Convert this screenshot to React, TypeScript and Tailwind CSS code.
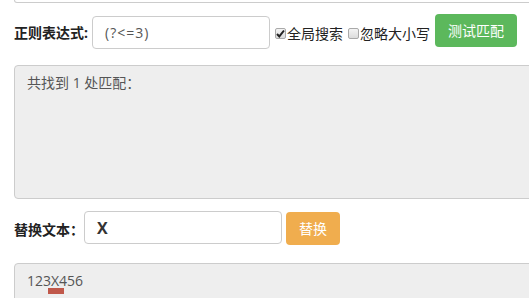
import React from "react";

const font = { fontFamily: '"Open Sans", "Noto Sans CJK SC", sans-serif' };

function Check({ checked }: { checked?: boolean }) {
  return (
    <span className="relative inline-block h-[11px] w-[11px] shrink-0 rounded-[2px] border border-[#a9a9a9] bg-gradient-to-b from-[#f4f4f4] to-[#dcdcdc]">
      {checked && (
        <svg viewBox="0 0 11 11" className="absolute -left-px -top-px h-[11px] w-[11px]">
          <path d="M2 6 L4.3 8.4 L9 2.5" fill="none" stroke="#222" strokeWidth="2" />
        </svg>
      )}
    </span>
  );
}

export default function App() {
  return (
    <div
      className="h-[298px] w-[529px] overflow-hidden bg-white pl-[14px] text-[14px] text-[#333]"
      style={font}
    >
      {/* tail of the panel above */}
      <div className="h-[3px] w-[540px] rounded-b-[4px] border-x border-b border-[#cccccc]" />

      {/* regex row */}
      <div className="mt-[11px] flex h-[35px] items-start">
        <span className="mt-[8px] w-[78px] font-bold text-[#222]">正则表达式:</span>
        <div className="mt-[2px] flex h-[33px] w-[178px] items-center rounded-[4px] border border-[#cccccc] px-[12px] tracking-[1px] text-[#555]">
          (?&lt;=3)
        </div>
        <label className="ml-[5px] mt-[9px] flex items-center gap-[1px] text-[#222]">
          <Check checked />
          全局搜索
        </label>
        <label className="ml-[5px] mt-[9px] flex items-center gap-[1px] text-[#222]">
          <Check />
          忽略大小写
        </label>
        <button className="ml-[5px] flex h-[33px] w-[82px] items-center justify-center rounded-[4px] bg-[#5cb85c] text-white">
          测试匹配
        </button>
      </div>

      {/* match result */}
      <div className="mt-[16px] h-[134px] w-[540px] rounded-[4px] border border-[#cccccc] bg-[#eeeeee] px-[12px] pt-[6px] text-[#555]">
        共找到 1 处匹配：
      </div>

      {/* replace row */}
      <div className="mt-[12px] flex h-[34px] items-start">
        <span className="mt-[8px] w-[70px] font-bold text-[#222]">替换文本：</span>
        <div className="flex h-[33px] w-[198px] items-center rounded-[4px] border border-[#cccccc] px-[12px] text-[16px] font-bold text-[#333]">
          X
        </div>
        <button className="ml-[4px] mt-[1px] flex h-[33px] w-[54px] items-center justify-center rounded-[4px] bg-[#f0ad4e] text-white">
          替换
        </button>
      </div>

      {/* replace result */}
      <div className="mt-[18px] h-[60px] w-[540px] rounded-[4px] border border-[#cccccc] bg-[#eeeeee] px-[12px] pt-[6px] text-[#555]">
        <span className="relative">
          123
          <span className="relative">
            X
            <span className="absolute left-[-3px] top-[17px] h-[6px] w-[16px] bg-[#c0584a]" />
          </span>
          456
        </span>
      </div>
    </div>
  );
}
